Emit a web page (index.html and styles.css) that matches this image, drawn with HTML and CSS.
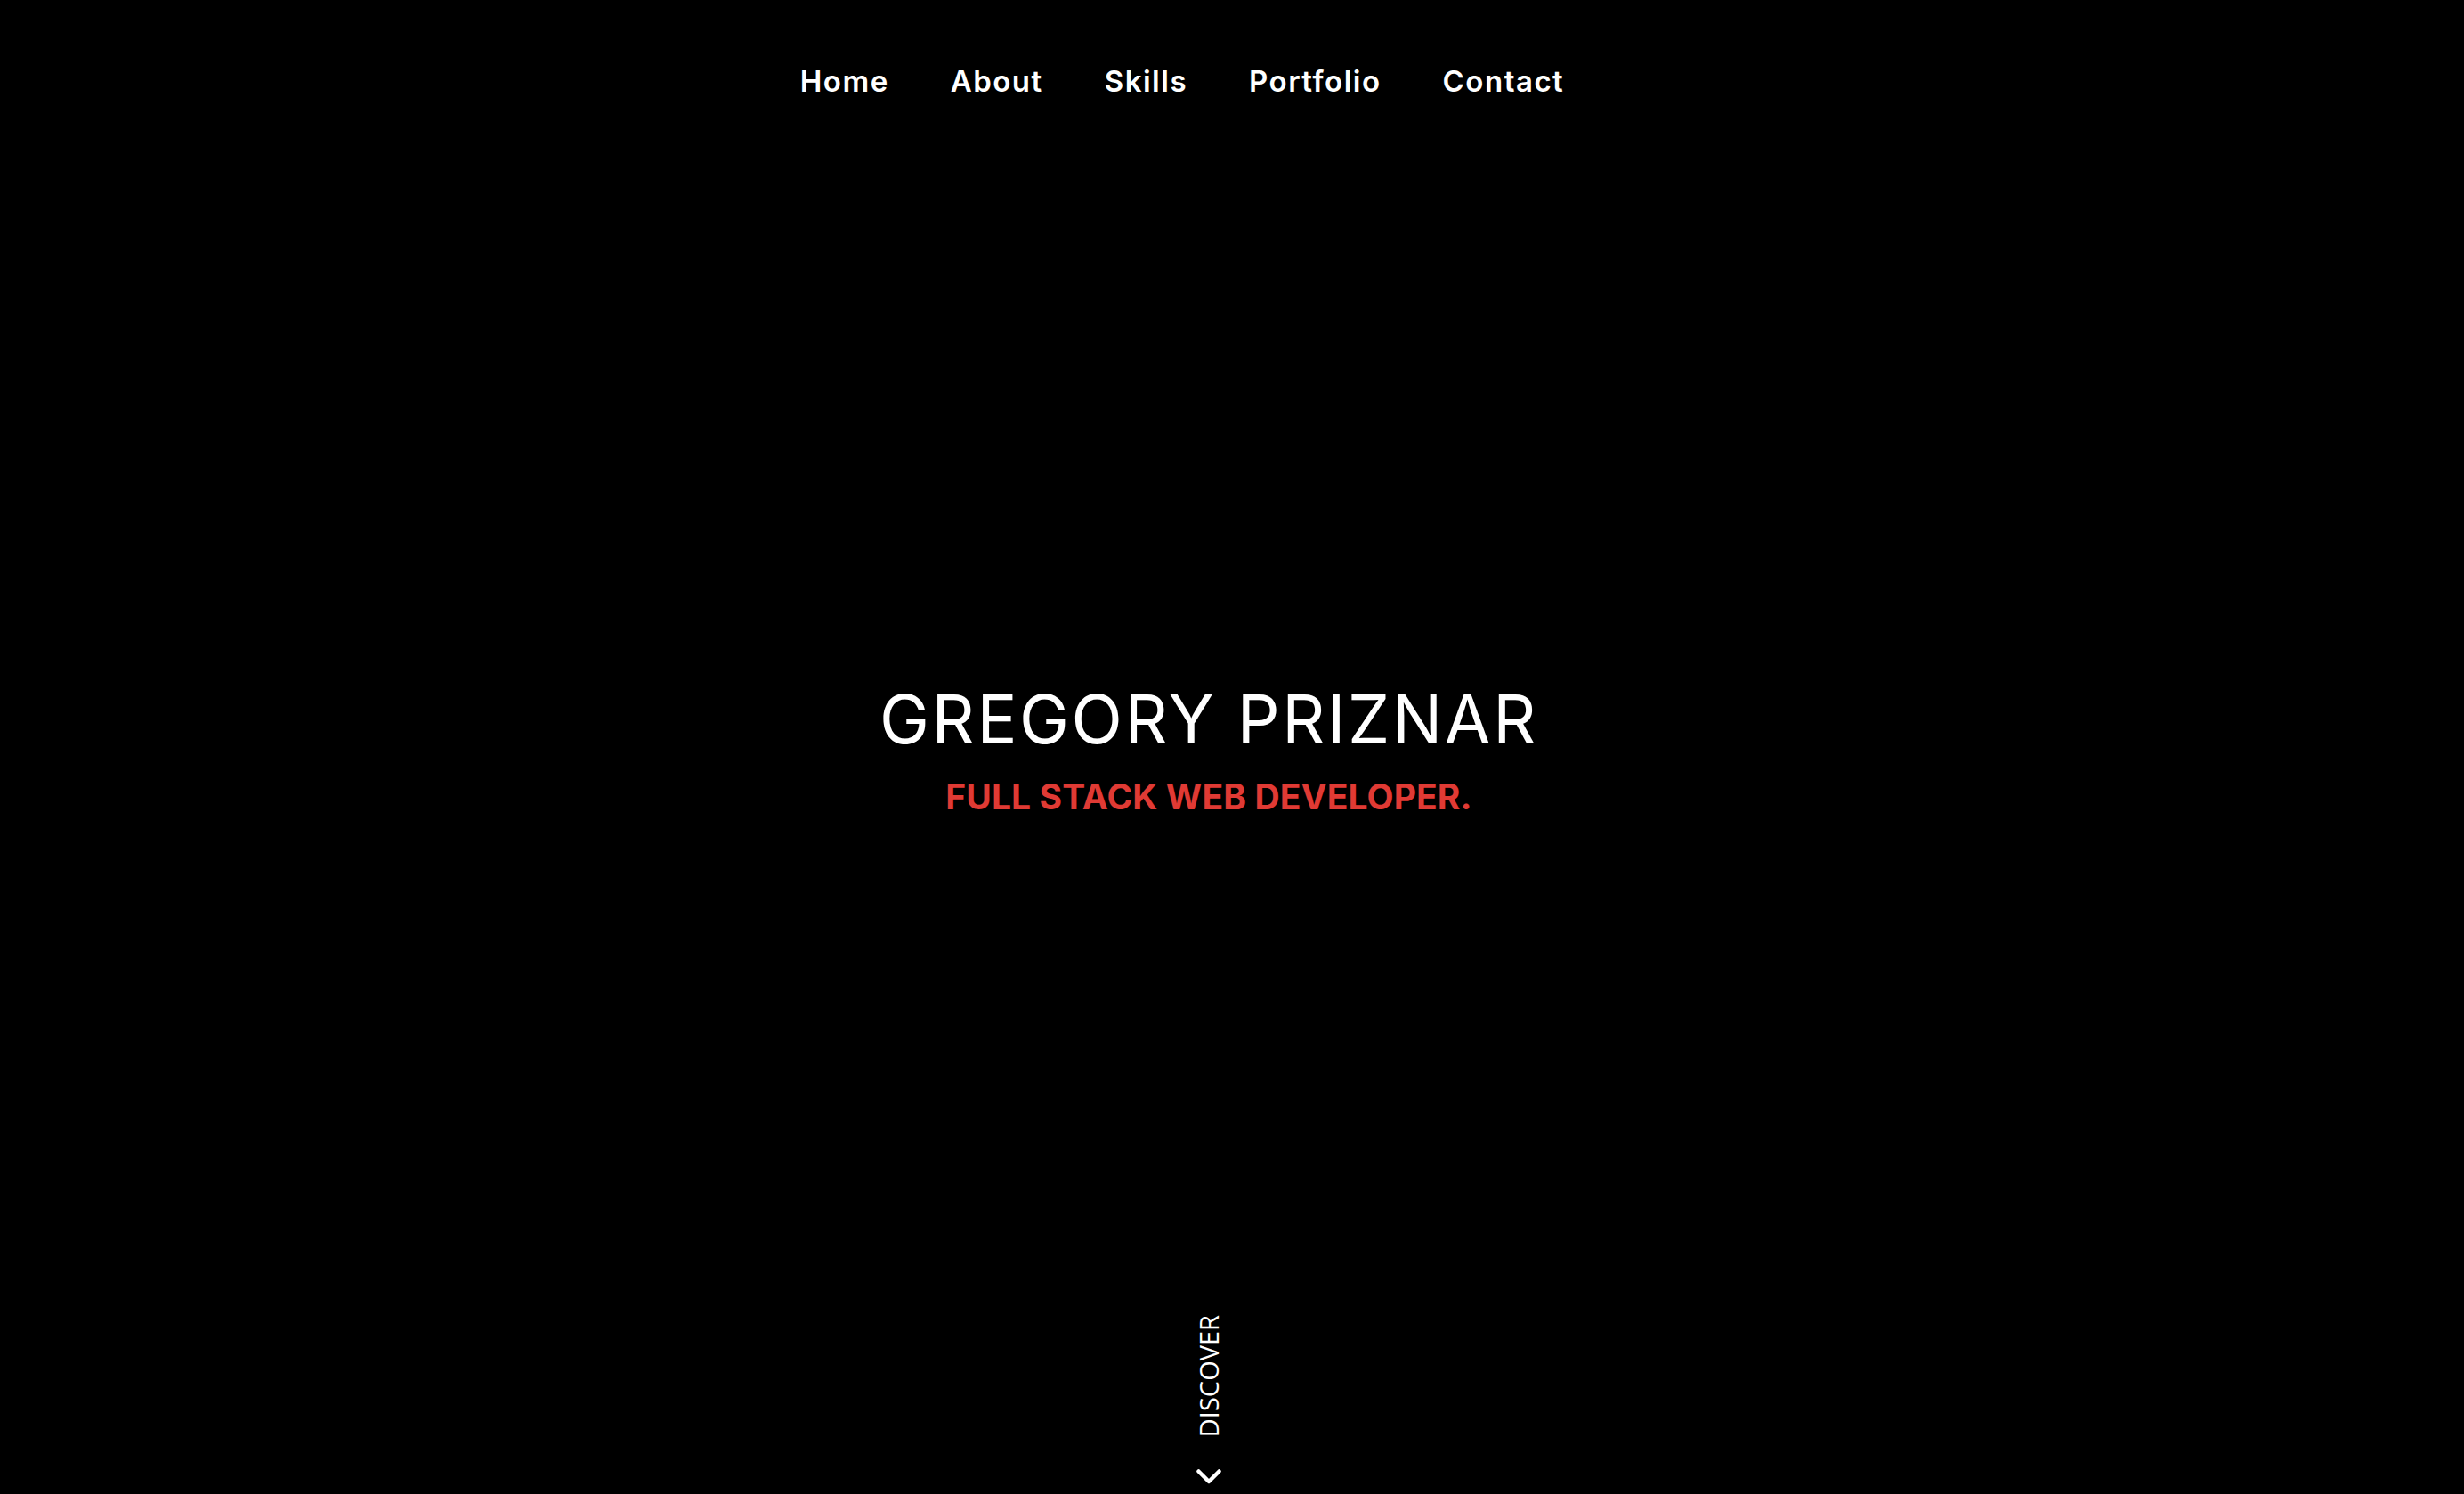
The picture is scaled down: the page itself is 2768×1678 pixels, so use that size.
FILE: index.html
```
<!DOCTYPE html>
<html lang="en">
<head>
<meta charset="utf-8">
<title>Gregory Priznar</title>
<link rel="stylesheet" href="styles.css">
</head>
<body>
<div class="page">
  <header class="nav">
    <a class="nav-link" href="#home">Home</a>
    <a class="nav-link" href="#about">About</a>
    <a class="nav-link" href="#skills">Skills</a>
    <a class="nav-link" href="#portfolio">Portfolio</a>
    <a class="nav-link" href="#contact">Contact</a>
  </header>
  <main class="hero">
    <h1 class="title">GREGORY PRIZNAR</h1>
    <p class="subtitle">FULL STACK WEB DEVELOPER.</p>
  </main>
  <footer class="discover">
    <span class="discover-text">DISCOVER</span>
    <svg class="chevron" width="28" height="18" viewBox="0 0 28 18"><path d="M2.5 2.5 L14 14 L25.5 2.5" fill="none" stroke="#fff" stroke-width="4.5" stroke-linecap="round" stroke-linejoin="round"/></svg>
  </footer>
</div>
</body>
</html>
```
FILE: styles.css
```
html, body {
  margin: 0;
  padding: 0;
  background: #000;
}
.page {
  height: 100vh;
  box-sizing: border-box;
  padding-right: 52px;
  display: flex;
  flex-direction: column;
  color: #fff;
  font-family: "Inter", "DejaVu Sans", sans-serif;
}
.nav {
  display: flex;
  justify-content: center;
  gap: 69px;
  padding-top: 68px;
  padding-right: 60px;
}
.nav-link {
  color: #fff;
  text-decoration: none;
  font-size: 33px;
  font-weight: 600;
  letter-spacing: 1.5px;
  line-height: 46px;
}
.hero {
  flex: 1;
  display: flex;
  flex-direction: column;
  align-items: center;
  justify-content: center;
  padding-top: 92px;
}
.title {
  margin: 0;
  font-size: 75px;
  font-weight: 400;
  line-height: 90px;
  letter-spacing: 2.6px;
}
.subtitle {
  margin: 0;
  margin-top: 17px;
  font-size: 39px;
  font-weight: 700;
  color: #e03a34;
  letter-spacing: 0.1px;
  line-height: 50px;
}
.discover {
  display: flex;
  flex-direction: column;
  align-items: center;
  gap: 36px;
  padding-bottom: 10px;
}
.discover-text {
  writing-mode: vertical-rl;
  transform: rotate(180deg);
  font-family: "Open Sans", sans-serif;
  font-size: 29px;
  line-height: 28px;
}
.chevron {
  display: block;
}
```
